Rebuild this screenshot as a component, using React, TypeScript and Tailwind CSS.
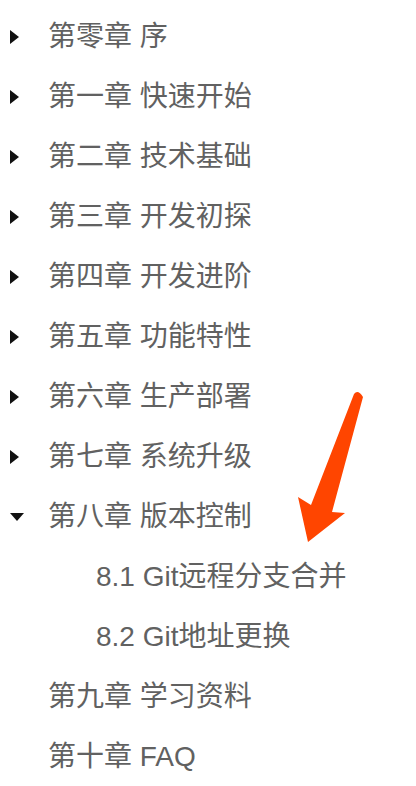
import React from "react";

const chapters: { title: string; open?: boolean; children?: string[] }[] = [
  { title: "第零章 序" },
  { title: "第一章 快速开始" },
  { title: "第二章 技术基础" },
  { title: "第三章 开发初探" },
  { title: "第四章 开发进阶" },
  { title: "第五章 功能特性" },
  { title: "第六章 生产部署" },
  { title: "第七章 系统升级" },
  { title: "第八章 版本控制", open: true, children: ["8.1 Git远程分支合并", "8.2 Git地址更换"] },
  { title: "第九章 学习资料", children: [] },
  { title: "第十章 FAQ", children: [] },
];

function Caret({ open }: { open?: boolean }) {
  if (open) {
    return (
      <svg width="16" height="10" viewBox="0 0 16 10" className="block">
        <polygon points="1,1 15,1 8,9" fill="#111" />
      </svg>
    );
  }
  return (
    <svg width="11" height="16" viewBox="0 0 11 16" className="block">
      <polygon points="1,1 10,8 1,15" fill="#111" />
    </svg>
  );
}

export default function App() {
  return (
    <div
      className="relative w-[416px] h-[786px] bg-white overflow-hidden"
      style={{ fontFamily: '"Liberation Sans", "Noto Sans CJK SC", sans-serif' }}
    >
      <ul className="pt-[7px] flex flex-col">
        {chapters.map((c) => (
          <li key={c.title}>
            <div className="h-[60px] flex items-center">
              <div className="w-[48px] flex items-center pl-[9px]">
                {c.children === undefined || c.open ? <Caret open={c.open} /> : null}
              </div>
              <span className="text-[28px] text-[#616161] leading-none whitespace-nowrap">{c.title}</span>
            </div>
            {c.open && c.children && (
              <ul>
                {c.children.map((s) => (
                  <li key={s} className="h-[60px] flex items-center pl-[96px]">
                    <span className="text-[28px] text-[#616161] leading-none whitespace-nowrap">{s}</span>
                  </li>
                ))}
              </ul>
            )}
          </li>
        ))}
      </ul>
      <svg className="absolute left-0 top-0" width="416" height="786" viewBox="0 0 416 786">
        <path
          d="M354,394 Q358,389 363,397 L332,512 L345,513 L308,542 L298,497 L311,505 Z"
          fill="#ff4500"
        />
      </svg>
    </div>
  );
}
